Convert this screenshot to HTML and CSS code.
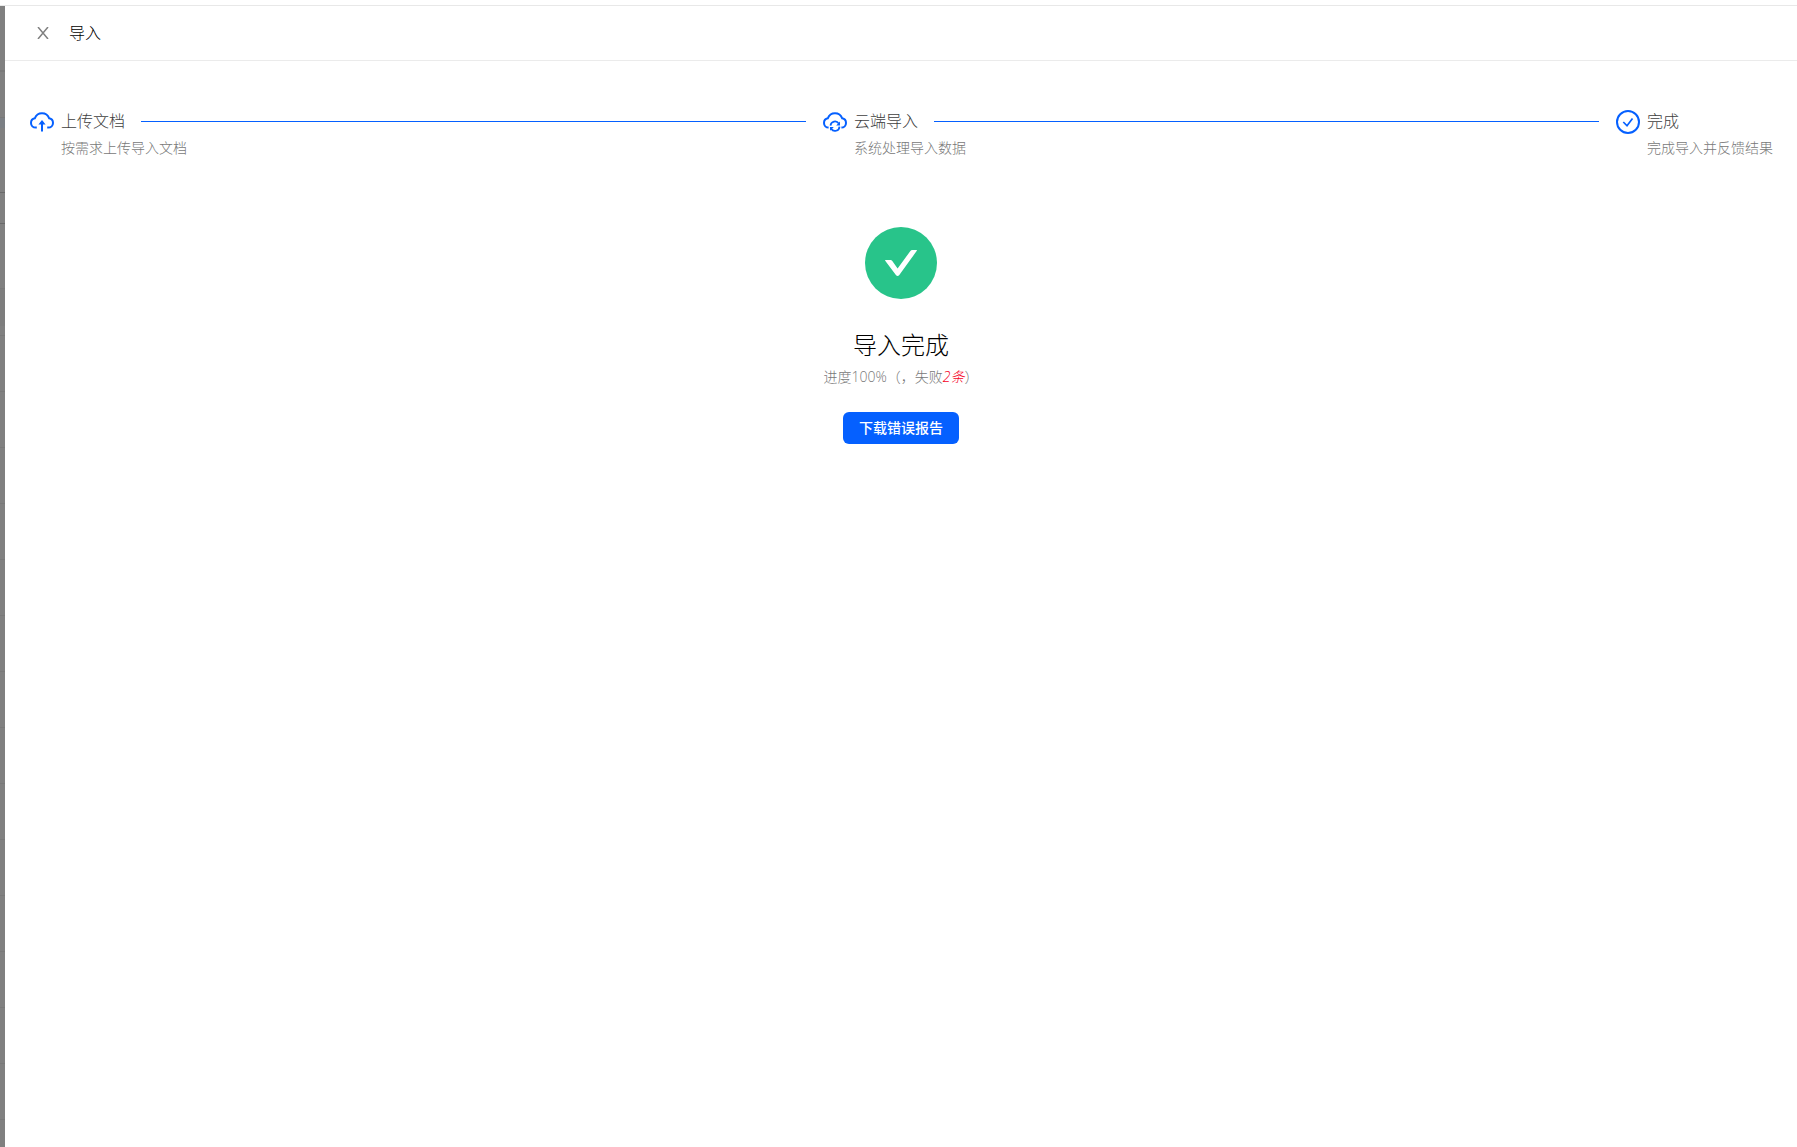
FILE: index.html
```
<!DOCTYPE html>
<html lang="zh-CN">
<head>
    <meta charset="UTF-8">
    <title>导入</title>
    <link rel="stylesheet" href="styles.css">
</head>
<body>
    <div class="page-mask"></div>
    <div class="drawer">
        <header class="drawer-header">
            <button class="close-button" type="button" aria-label="关闭">
                <svg width="12" height="12" viewBox="0 0 12 12"><path d="M1 0L11 12M11 0L1 12"/></svg>
            </button>
            <h1 class="drawer-title">导入</h1>
        </header>

        <main class="drawer-body">
            <ol class="steps">
                <li class="step">
                    <svg class="step-icon" viewBox="0 0 24 24">
                        <path d="M6.8 17.5H5.8C3 17.5 1 15.5 1 12.9C1 10.6 2.5 8.7 4.8 8.3C6 5.2 8.7 3.3 12 3.3S18 5.2 19.2 8.3C21.5 8.7 23 10.6 23 12.9C23 15.5 21 17.5 18.2 17.5H17.2"/>
                        <path d="M12 21.5V12"/>
                        <path class="fill" d="M12 10L15.6 14.6H8.4Z"/>
                    </svg>
                    <div class="step-content">
                        <div class="step-title">上传文档</div>
                        <div class="step-text">按需求上传导入文档</div>
                    </div>
                </li>
                <li class="step">
                    <svg class="step-icon" viewBox="0 0 24 24">
                        <path d="M5.6 17.5C3 17.5 1 15.5 1 12.9C1 10.6 2.5 8.7 4.8 8.3C6 5.2 8.7 3.3 12 3.3S18 5.2 19.2 8.3C21.5 8.7 23 10.6 23 12.9C23 15.5 21 17.5 18.4 17.5"/>
                        <path class="thin" d="M7.5 15.6A4.5 4.5 0 0 1 15.8 13.6M16.5 16.6A4.5 4.5 0 0 1 8.2 18.8"/>
                        <path class="fill" d="M17 11.6V15.4H13.2ZM7 20.8V17H10.8Z"/>
                    </svg>
                    <div class="step-content">
                        <div class="step-title">云端导入</div>
                        <div class="step-text">系统处理导入数据</div>
                    </div>
                </li>
                <li class="step">
                    <svg class="step-icon" viewBox="0 0 24 24">
                        <circle cx="12" cy="12" r="11"/>
                        <path class="thin" d="M7.3 12L11 15.8L16.5 8.5"/>
                    </svg>
                    <div class="step-content">
                        <div class="step-title">完成</div>
                        <div class="step-text">完成导入并反馈结果</div>
                    </div>
                </li>
            </ol>

            <section class="result">
                <svg class="result-icon" viewBox="0 0 72 72">
                    <circle cx="36" cy="36" r="36"/>
                    <path d="M20.5 33H25.5Q26.6 33 27.3 34L32.6 41.6L45.2 24.2Q46 23 47.3 23H51.5Q52.3 23 51.8 23.8L34.3 48Q32.6 50 30.9 48L20.2 33.8Q19.8 33 20.5 33Z"/>
                </svg>
                <h2 class="result-title">导入完成</h2>
                <p class="result-text">进度100%（，失败<em>2条</em>）</p>
                <button class="report-button" type="button">下载错误报告</button>
            </section>
        </main>
    </div>
</body>
</html>
```

FILE: styles.css
```
* {
    box-sizing: border-box;
}
body {
    display: flex;
    min-height: 100vh;
    margin: 0;
    padding-top: 5px;
    background-color: white;
    font-family: "Open Sans", "Noto Sans CJK SC", sans-serif;
    font-size: 14px;
    font-weight: 300;
    line-height: 22px;
    text-spacing-trim: space-all;
}
/* visible edge of the page under the drawer */
.page-mask {
    width: 5px;
    border-top: 1px solid #e8e8e8;
    background:
        linear-gradient(#808080 0 64px, #797979 64px 66px, #808080 66px 111px, #787878 111px 112px, #7b7f84 112px 122px, #808080 122px 186px, #696969 186px 187px, #808080 187px 217px, #696969 217px 218px, #808080 218px 282px, #797979 282px 283px, #7d7d7d 283px 320px) 0 0 / 100% 320px no-repeat,
        repeating-linear-gradient(#808080 0 49px, #797979 49px 50px, #808080 50px 56px);
}
.drawer {
    flex: 1;
    border-top: 1px solid #e8e8e8;
}
.drawer-header {
    display: flex;
    align-items: center;
    gap: 20px;
    height: 55px;
    padding: 0 32px;
    border-bottom: 1px solid #ebebeb;
}
.close-button {
    display: flex;
    padding: 0;
    border: none;
    background: none;
    cursor: pointer;
}
.close-button svg {
    stroke: #808080;
    stroke-width: 1.5;
}
.drawer-title {
    margin: 0;
    color: #000;
    font-size: 16px;
    font-weight: 300;
}
.drawer-body {
    padding: 44px 24px;
}
.steps {
    display: flex;
    gap: 16px;
    margin: 0;
    padding: 0;
    list-style: none;
}
.step {
    display: flex;
    flex: 1;
    gap: 7px;
}
.step:last-child {
    flex: none;
}
.step-icon {
    width: 24px;
    height: 24px;
    margin: 5px 0 0 1px;
    fill: none;
    stroke: #0560ff;
    stroke-width: 2;
}
.step-icon .thin {
    stroke-width: 1.7;
}
.step-icon .fill {
    fill: #0560ff;
    stroke: none;
}
.step-content {
    flex: 1;
}
.step-title {
    display: flex;
    align-items: center;
    gap: 16px;
    color: #404040;
    font-size: 16px;
    line-height: 32px;
}
.step:not(:last-child) .step-title::after {
    content: "";
    flex: 1;
    height: 1px;
    background-color: #0560ff;
}
.step-text {
    color: #787878;
}
.result {
    padding: 68px 32px;
    text-align: center;
}
.result-icon {
    display: block;
    width: 72px;
    height: 72px;
    margin: 0 auto 24px;
    fill: #28c48a;
}
.result-icon path {
    fill: white;
}
.result-title {
    margin: 0;
    color: #000;
    font-size: 24px;
    font-weight: 300;
    line-height: 43px;
}
.result-text {
    margin: 0 0 24px;
    color: #787878;
}
.result-text em {
    color: #f5001d;
}
.report-button {
    height: 32px;
    padding: 0 16px 2px;
    border: none;
    border-radius: 6px;
    background-color: #0560ff;
    color: white;
    font-family: inherit;
    font-size: 14px;
    font-weight: 500;
    cursor: pointer;
}
```
